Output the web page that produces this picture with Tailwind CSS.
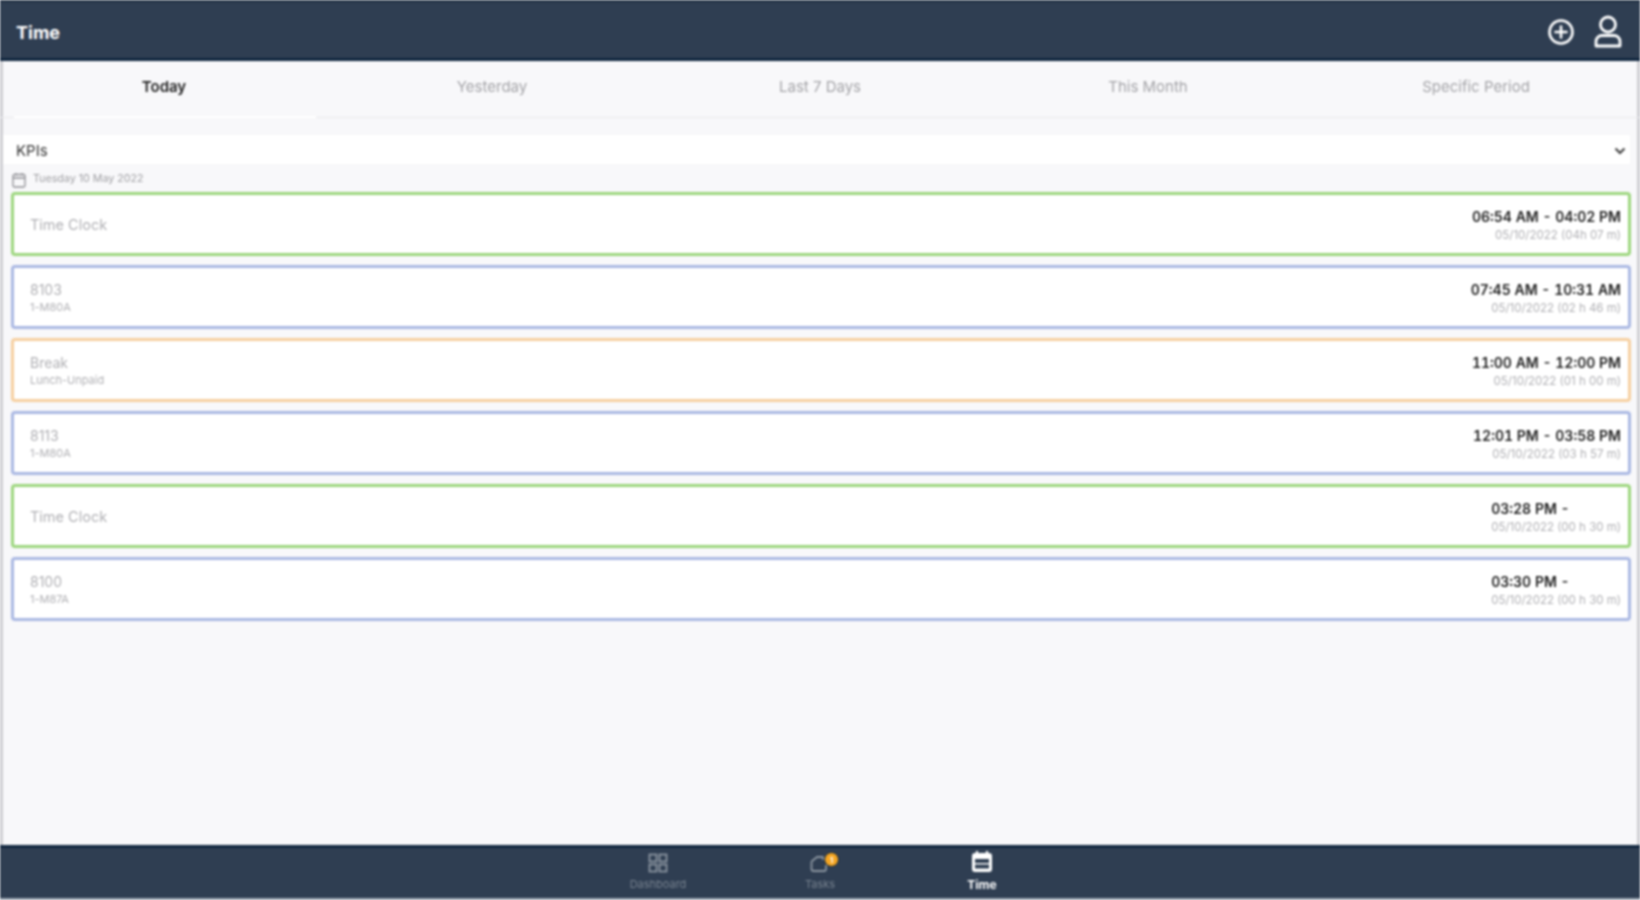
<!DOCTYPE html>
<html lang="en">
<head>
    <meta charset="UTF-8">
    <title>Time</title>
    <script src="https://cdn.jsdelivr.net/npm/@tailwindcss/browser@4"></script>
</head>
<body class="bg-[#f8f8fa] font-['Inter','Liberation_Sans',sans-serif]">
    <div class="h-[900px] w-[1640px] flex flex-col overflow-hidden blur-[0.8px]">
        <!-- header -->
        <header class="h-[61px] shrink-0 bg-[#2f3e52] border-t-[3px] border-t-[#28374a] border-b-[3px] border-b-[#10263f] flex items-center justify-between pl-4 pr-[17px]">
            <h1 class="pt-[4px] text-[18px] font-bold text-white">Time</h1>
            <div class="flex items-center gap-[18px] pt-[2px]">
                <svg class="w-[28px] h-[28px]" viewBox="0 0 28 28" fill="none" stroke="white" stroke-width="2.6" stroke-linecap="round"><circle cx="14" cy="14" r="11.5"/><path d="M14 8.5v11M8.5 14h11"/></svg>
                <svg class="w-[30px] h-[34px]" viewBox="0 0 30 34" fill="none" stroke="white" stroke-width="2.8" stroke-linejoin="round"><circle cx="15" cy="9.5" r="7.5"/><path d="M3 31v-4.500a6 6 0 0 1 6-6h12a6 6 0 0 1 6 6v4.500z"/></svg>
            </div>
        </header>

        <main class="flex-1 min-h-0 border-x-[3px] border-[#cfcfd3] flex flex-col">
            <!-- tabs -->
            <nav class="mt-px h-[56px] shrink-0 grid grid-cols-5 border-b border-[#e9e9ec] pb-[4px] text-[15px] text-[#a4a4a8] -mx-[3px]">
                <div class="relative flex items-center justify-center font-semibold text-[#222]">
                    Today
                    <span class="absolute left-[14px] right-[12px] -bottom-[5px] h-[2px] bg-white"></span>
                </div>
                <div class="flex items-center justify-center">Yesterday</div>
                <div class="flex items-center justify-center">Last 7 Days</div>
                <div class="flex items-center justify-center">This Month</div>
                <div class="flex items-center justify-center">Specific Period</div>
            </nav>

            <!-- KPIs -->
            <div class="mt-[17px] mr-[7px] h-[29px] shrink-0 bg-white flex items-center justify-between pl-[13px] pr-[4px] pt-[3px] text-[15px] text-[#333]">
                <span>KPIs</span>
                <svg class="w-[12px] h-[8px]" viewBox="0 0 12 8" fill="none" stroke="#444" stroke-width="2.2"><path d="M1.500 1.500 6 6l4.500-4.500"/></svg>
            </div>

            <!-- date -->
            <div class="h-[28px] shrink-0 flex items-center gap-[6px] pl-[9px] pt-[3px] text-[10.7px] text-[#a0a0a4]">
                <svg class="w-[14px] h-[16px]" viewBox="0 0 14 16" fill="none" stroke="#8f8f94" stroke-width="1.300"><rect x="1" y="2.500" width="12" height="12.500" rx="1.500"/><path d="M1 6h12M4 1v2.500M10 1v2.500"/></svg>
                <span class="ml-px">Tuesday 10 May 2022</span>
            </div>

            <!-- entries -->
            <section class="flex flex-col gap-[9px] pl-[8px] pr-[6px]">
                <article class="h-[64px] bg-white rounded-[4px] border-[3px] border-[#9dd67f] flex items-center justify-between pl-[16px] pr-[7px]">
                    <div class="pt-[2px] text-[14.5px] text-[#b0b0b4]">Time Clock</div>
                    <div class="pt-[3px] flex flex-col items-end">
                        <div class="text-[14px] leading-[20px] font-semibold tabular-nums text-[#222]">06:54 AM - 04:02 PM</div>
                        <div class="text-[11.5px] leading-[17px] text-[#b0b0b4]">05/10/2022 (04h 07 m)</div>
                    </div>
                </article>
                <article class="h-[64px] bg-white rounded-[4px] border-[3px] border-[#aab8e3] flex items-center justify-between pl-[16px] pr-[7px]">
                    <div class="pt-[2px]">
                        <div class="text-[14px] leading-[18px] text-[#b0b0b4]">8103</div>
                        <div class="text-[11px] leading-[17px] text-[#b0b0b4]">1-M80A</div>
                    </div>
                    <div class="pt-[3px] flex flex-col items-end">
                        <div class="text-[14px] leading-[20px] font-semibold tabular-nums text-[#222]">07:45 AM - 10:31 AM</div>
                        <div class="text-[11.5px] leading-[17px] text-[#b0b0b4]">05/10/2022 (02 h 46 m)</div>
                    </div>
                </article>
                <article class="h-[64px] bg-white rounded-[4px] border-[3px] border-[#f6cfa0] flex items-center justify-between pl-[16px] pr-[7px]">
                    <div class="pt-[2px]">
                        <div class="text-[14px] leading-[18px] text-[#b0b0b4]">Break</div>
                        <div class="text-[11px] leading-[17px] text-[#b0b0b4]">Lunch-Unpaid</div>
                    </div>
                    <div class="pt-[3px] flex flex-col items-end">
                        <div class="text-[14px] leading-[20px] font-semibold tabular-nums text-[#222]">11:00 AM - 12:00 PM</div>
                        <div class="text-[11.5px] leading-[17px] text-[#b0b0b4]">05/10/2022 (01 h 00 m)</div>
                    </div>
                </article>
                <article class="h-[64px] bg-white rounded-[4px] border-[3px] border-[#aab8e3] flex items-center justify-between pl-[16px] pr-[7px]">
                    <div class="pt-[2px]">
                        <div class="text-[14px] leading-[18px] text-[#b0b0b4]">8113</div>
                        <div class="text-[11px] leading-[17px] text-[#b0b0b4]">1-M80A</div>
                    </div>
                    <div class="pt-[3px] flex flex-col items-end">
                        <div class="text-[14px] leading-[20px] font-semibold tabular-nums text-[#222]">12:01 PM - 03:58 PM</div>
                        <div class="text-[11.5px] leading-[17px] text-[#b0b0b4]">05/10/2022 (03 h 57 m)</div>
                    </div>
                </article>
                <article class="h-[64px] bg-white rounded-[4px] border-[3px] border-[#9dd67f] flex items-center justify-between pl-[16px] pr-[7px]">
                    <div class="pt-[2px] text-[14.5px] text-[#b0b0b4]">Time Clock</div>
                    <div class="pt-[3px] flex flex-col items-start">
                        <div class="text-[14px] leading-[20px] font-semibold tabular-nums text-[#222]">03:28 PM -</div>
                        <div class="text-[11.5px] leading-[17px] text-[#b0b0b4]">05/10/2022 (00 h 30 m)</div>
                    </div>
                </article>
                <article class="h-[64px] bg-white rounded-[4px] border-[3px] border-[#aab8e3] flex items-center justify-between pl-[16px] pr-[7px]">
                    <div class="pt-[2px]">
                        <div class="text-[14px] leading-[18px] text-[#b0b0b4]">8100</div>
                        <div class="text-[11px] leading-[17px] text-[#b0b0b4]">1-M87A</div>
                    </div>
                    <div class="pt-[3px] flex flex-col items-start">
                        <div class="text-[14px] leading-[20px] font-semibold tabular-nums text-[#222]">03:30 PM -</div>
                        <div class="text-[11.5px] leading-[17px] text-[#b0b0b4]">05/10/2022 (00 h 30 m)</div>
                    </div>
                </article>
            </section>
        </main>

        <!-- bottom nav -->
        <footer class="h-[55px] shrink-0 bg-[#2f3e52] border-t-[3px] border-t-[#10263f] border-b-[2px] border-b-[#9aa5b1] flex justify-center">
            <div class="w-[164px] flex flex-col items-center pt-[5px] text-[11px] text-[#77828f]">
                <svg class="w-[20px] h-[20px]" viewBox="0 0 20 20" fill="none" stroke="#8b95a0" stroke-width="1.800"><rect x="1.500" y="1.500" width="7" height="7"/><rect x="11.500" y="1.500" width="7" height="7"/><rect x="1.500" y="11.500" width="7" height="7"/><rect x="11.500" y="11.500" width="7" height="7"/></svg>
                <span class="mt-[3px]">Dashboard</span>
            </div>
            <div class="w-[164px] -ml-[2px] flex flex-col items-center pt-[5px] text-[11px] text-[#77828f]">
                <div class="relative w-[20px] h-[20px]">
                    <svg class="w-[20px] h-[20px]" viewBox="0 0 20 20" fill="none" stroke="#8b95a0" stroke-width="1.800" stroke-linejoin="round"><path d="M1.500 8.500 7 4h6v3M1.500 8.500V16a2 2 0 0 0 2 2H14a2 2 0 0 0 2-2v-4"/></svg>
                    <span class="absolute -top-[1px] left-[14px] w-[15px] h-[15px] rounded-full bg-[#f5a623] border border-[#10263f] flex items-center justify-center text-[8px] leading-none font-bold text-white">1</span>
                </div>
                <span class="mt-[3px]">Tasks</span>
            </div>
            <div class="w-[164px] -ml-[2px] flex flex-col items-center pt-[2px] text-[12px] font-bold text-white">
                <svg class="w-[22px] h-[23px]" viewBox="0 0 22 23" fill="none"><rect x="1" y="3" width="20" height="19" rx="3" fill="white"/><rect x="4" y="9" width="14" height="4" fill="#2f3e52"/><rect x="4" y="14.500" width="14" height="4" fill="#2f3e52"/><path d="M6 1v4M16 1v4" stroke="white" stroke-width="2.200"/></svg>
                <span class="mt-[3px]">Time</span>
            </div>
        </footer>
    </div>
</body>
</html>
